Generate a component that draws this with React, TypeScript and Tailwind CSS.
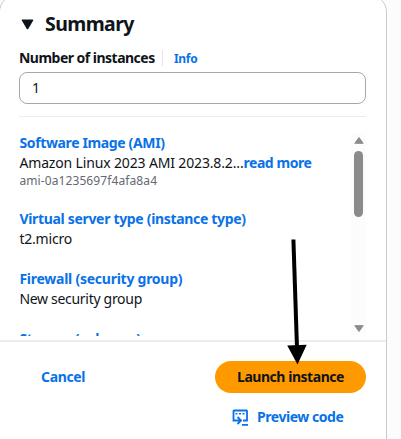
import type { ReactNode } from "react";

function Heading({ children, className = "" }: { children: ReactNode; className?: string }) {
  return <div className={`h-5 text-[14px] leading-5 font-bold whitespace-nowrap text-[#0972e8] ${className}`}>{children}</div>;
}

function Scrollbar() {
  return (
    <div className="flex h-[203px] w-[15px] shrink-0 flex-col items-center bg-[#fcfcfc]">
      <svg className="mt-1 h-[7px] w-[10px]" viewBox="0 0 10 7">
        <path d="M5 .5 9.2 6.3H.8Z" fill="#8b8b8b" stroke="#8b8b8b" strokeLinejoin="round" />
      </svg>
      <div className="mt-[7px] h-[66px] w-[9px] rounded-full bg-[#8b8b8b]" />
      <svg className="mt-auto mb-1 h-[7px] w-[10px]" viewBox="0 0 10 7">
        <path d="M5 6.5 9.2 .7H.8Z" fill="#8b8b8b" stroke="#8b8b8b" strokeLinejoin="round" />
      </svg>
    </div>
  );
}

export default function App() {
  return (
    <div className="relative h-[439px] w-[401px] overflow-hidden bg-[#fcfcfc] font-['Noto_Sans',sans-serif] text-[#0f141a]">
      <div className="-mt-[5px] -ml-px flex h-[460px] w-[388px] flex-col rounded-[17px] border border-[#c9cbcf] bg-white">
        <div className="mt-4 flex h-6 items-center pl-[21px]">
          <svg className="h-[11px] w-[13px]" viewBox="0 0 13 11">
            <path d="M1.500 1.200h10L6.500 9.500Z" fill="#0f141a" stroke="#0f141a" strokeWidth="1.600" strokeLinejoin="round" />
          </svg>
          <h2 className="ml-[11px] text-[19.5px] leading-6 font-bold tracking-[-0.6px]">Summary</h2>
        </div>
        <div className="mt-3 flex h-5 items-center pl-[19px]">
          <label className="-mt-px w-[143px] text-[14px] font-bold tracking-[-0.52px] whitespace-nowrap">Number of instances</label>
          <span className="h-4 w-px bg-[#e4e5e8]" />
          <a className="mt-px ml-[11px] text-[12px] font-bold tracking-[-0.3px] text-[#0972e8]">Info</a>
        </div>
        <div className="mt-1 ml-[19px] flex h-8 w-[347px] items-center rounded-lg border border-[#a5a7aa] pl-3 text-[14px]"><span className="-mt-0.5">1</span></div>
        <div className="mt-[12px] ml-[19px] h-px w-[347px] bg-[#ebebf0]" />
        <div className="mt-4 ml-[19px] flex h-[203px] w-[347px] overflow-hidden">
          <div className="min-w-0 flex-1 pl-[0.4px] text-[14px] leading-5 whitespace-nowrap">
            <Heading className="tracking-[-0.36px]">Software Image (AMI)</Heading>
            <div className="h-5"><span className="tracking-[-0.15px]">Amazon Linux 2023 AMI 2023.8.2...</span><b className="tracking-[-0.45px] text-[#0972e8]">read more</b></div>
            <div className="h-4 text-[12px] leading-4 tracking-[0.1px] text-[#656871]">ami-0a1235697f4afa8a4</div>
            <Heading className="mt-5 tracking-[-0.32px]">Virtual server type (instance type)</Heading>
            <div className="h-5 tracking-[-0.2px]">t2.micro</div>
            <Heading className="mt-5 tracking-[-0.25px]">Firewall (security group)</Heading>
            <div className="h-5 tracking-[-0.3px]">New security group</div>
            <Heading className="mt-5 tracking-[-0.3px]">Storage (volumes)</Heading>
          </div>
          <Scrollbar />
        </div>
        <div className="mt-1 h-[2px] shrink-0 bg-[#ececee]" />
        <div className="mt-[19px] ml-[41px] flex h-8 w-[325px] items-center justify-between text-[14px] font-bold">
          <button className="pb-0.5 tracking-[-0.35px] text-[#0972e8]">Cancel</button>
          <button className="h-8 w-[151px] rounded-full bg-[#ff9900] pb-0.5 tracking-[-0.46px]">Launch instance</button>
        </div>
        <button className="mt-2 ml-[231px] flex h-8 w-[120px] items-center text-[14px] font-bold text-[#0972e8]">
          <svg className="h-[17px] w-[18px]" viewBox="-0.500 0 18 17" fill="none" stroke="#0972e8" strokeWidth="1.800">
            <path d="M2 10.500V2Q2 1.500 2.500 1.500H15Q15.500 1.500 15.500 2V11.500H11.500M1.100 11.500H9M6 8 9.500 11.500 6 15M10.500 15.800h6" />
            <path d="M4 4.700h2M7.500 4.700h2M11 4.700h2" strokeWidth="1.500" />
          </svg>
          <span className="-mt-px ml-[8px] tracking-[-0.45px] whitespace-nowrap">Preview code</span>
        </button>
      </div>
      <svg className="absolute top-[236px] left-[284px] h-[130px] w-[26px]" viewBox="284 236 26 130">
        <path d="M293.400 239.500 297 348" stroke="#000" strokeWidth="4" />
        <path d="M287.200 345.500 306.700 344.800 297.500 364.500Z" />
      </svg>
    </div>
  );
}
